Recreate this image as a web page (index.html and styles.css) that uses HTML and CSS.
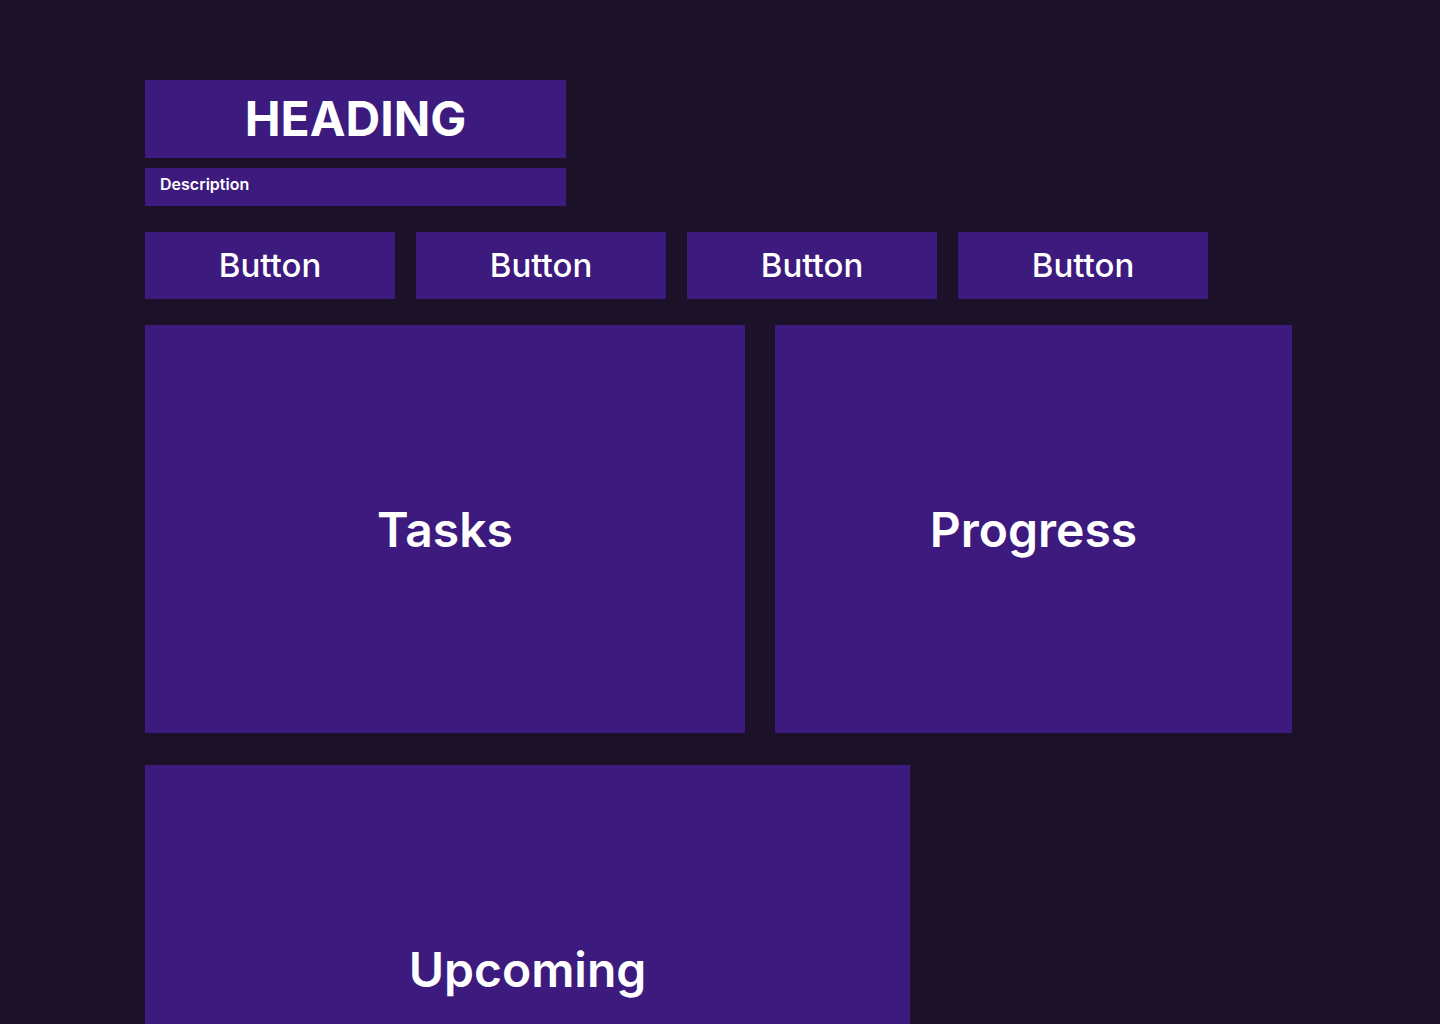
FILE: index.html
```html
<!DOCTYPE html>
<html lang="en">
<head>
<meta charset="utf-8">
<title>Dashboard</title>
<link rel="stylesheet" href="styles.css">
</head>
<body>
<main class="page">
  <header class="header">
    <h1 class="heading">HEADING</h1>
    <p class="description">Description</p>
  </header>
  <nav class="buttons">
    <button class="btn">Button</button>
    <button class="btn">Button</button>
    <button class="btn">Button</button>
    <button class="btn">Button</button>
  </nav>
  <section class="row">
    <div class="card card-tasks">Tasks</div>
    <div class="card card-progress">Progress</div>
  </section>
  <section class="row row-last">
    <div class="card card-upcoming">Upcoming</div>
  </section>
</main>
</body>
</html>
```

FILE: styles.css
```css
* { box-sizing: border-box; }
html, body { margin: 0; padding: 0; }
body {
  background: #1b1128;
  font-family: Inter, "Noto Sans", sans-serif;
  color: #ffffff;
  height: 1024px;
  overflow: hidden;
}
.page {
  padding: 80px 0 0 145px;
  display: flex;
  flex-direction: column;
}
.header {
  width: 421px;
  display: flex;
  flex-direction: column;
  gap: 10px;
}
.heading {
  margin: 0;
  height: 78px;
  padding-bottom: 2px;
  background: #3c1a7e;
  display: flex;
  align-items: center;
  justify-content: center;
  font-size: 48px;
  font-weight: 700;
  letter-spacing: 0;
}
.description {
  margin: 0;
  height: 38px;
  background: #3c1a7e;
  padding: 6px 15px 0;
  font-size: 16px;
  font-weight: 600;
  line-height: 20px;
}
.buttons {
  margin-top: 26px;
  display: flex;
  gap: 21px;
}
.btn {
  width: 250px;
  height: 67px;
  border: 0;
  background: #3c1a7e;
  color: #ffffff;
  font-family: Inter, "Noto Sans", sans-serif;
  font-size: 33px;
  font-weight: 500;
  padding: 0 0 2px;
}
.row {
  margin-top: 26px;
  display: flex;
  gap: 30px;
}
.row-last { margin-top: 32px; }
.card {
  background: #3c1a7e;
  height: 408px;
  display: flex;
  align-items: center;
  justify-content: center;
  font-size: 48px;
  font-weight: 600;
}
.card-tasks { width: 600px; }
.card-progress { width: 517px; }
.card-upcoming { width: 765px; height: 408px; }
```
